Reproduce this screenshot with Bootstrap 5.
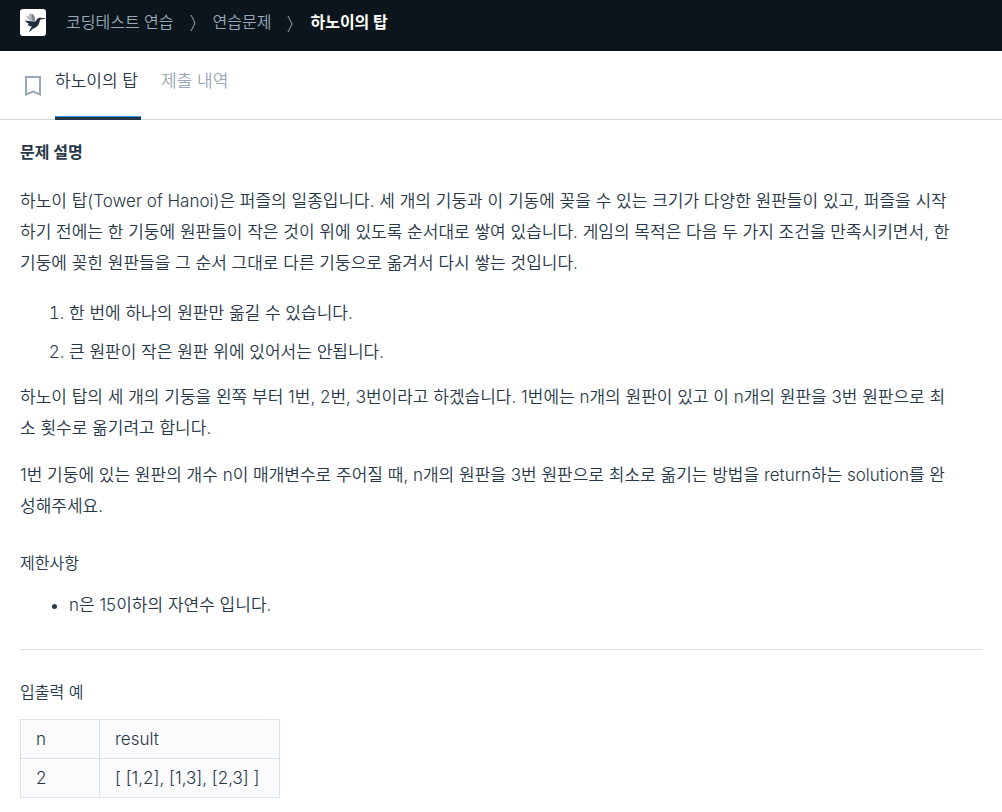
<!DOCTYPE html>
<html lang="ko">
<head>
<meta charset="utf-8">
<meta name="viewport" content="width=device-width, initial-scale=1">
<title>하노이의 탑</title>
<link href="https://cdn.jsdelivr.net/npm/bootstrap@5.3.0/dist/css/bootstrap.min.css" rel="stylesheet">
<style>
body{font-family:Inter,"Noto Sans CJK KR",sans-serif;font-weight:350;color:#263747;background:#fff;font-size:17px;line-height:31px}
.topbar{background:#0c151c;height:51px;padding:0 20px 6px}
.topbar .breadcrumb{font-size:16px;line-height:24px;gap:13px}
.topbar .breadcrumb a,.topbar .breadcrumb span{padding-bottom:2px}
.topbar a{color:#98a8b9}
.topbar .active{color:#fff}
.tabbar{border-bottom:1px solid #d0dadf;height:69px;padding:0 24px}
.tabbar .save-btn{color:#98a8b9;line-height:0;margin-right:13px;padding-top:2px}
.tabbar .nav{gap:20px}
.tabbar .nav-link{color:#98a8b9;height:69px;line-height:24px;padding:18px 0 0;min-width:86px}
.tabbar .nav-link.active{color:#263747;border-bottom:3px solid #263747;box-shadow:inset 0 -1px #3396f4}
.problem{padding:17px 20px 14px}
.problem h1{font-size:16px;line-height:30px;margin-bottom:19px}
.problem h2{font-size:16px;font-weight:350;line-height:24px;margin:29px 0 15px}
.problem ol,.problem ul{padding-left:49px}
.problem ol{margin-bottom:6px;padding-top:3px}
.problem li{padding-bottom:8px}
.problem hr{border-color:#d7e2eb;opacity:1;margin:20px 0 30px}
.sample{border-collapse:collapse;font-size:17px;min-width:260px}
.sample th,.sample td{border:1px solid #d7e2eb;background:#fbfbfd;padding:4px 15px;line-height:30px;font-weight:350}
.sample th:first-child{width:79px}
</style>
</head>
<body>
<header class="topbar d-flex align-items-center">
  <a href="#" class="d-flex me-3 pe-1" aria-label="홈">
    <svg width="26" height="27" viewBox="0 0 26 27"><rect width="26" height="27" rx="3" fill="#fff"/><path d="M6 7l3 .5V4.500l3.500 1 2.500 6-4 .5-3-2z" fill="#b3b8c0"/><path d="M11.500 4l3 3 .5 5-3-1z" fill="#7b8390"/><path d="M4.500 11.500l7 .7 4 .3c1-1 1.500-3 3.500-3.700 1.500-.4 2 .2 6 .3v.7l-4.500.7c-1 1-1 4-2.500 6-1.500 1.800-3.500 2.200-5.500 3.500l-3.500 3.500 1.200-3.500 1.800-2.500c-2.500 0-3.500-.8-4.500-2.200h2c-1.500-.8-3-2-5-3.800z" fill="#202b3d"/></svg>
  </a>
  <nav aria-label="경로">
    <div class="breadcrumb d-flex align-items-center mb-0">
      <a href="#" class="text-decoration-none">코딩테스트 연습</a>
      <svg width="13" height="18" viewBox="0 0 13 18" fill="none" stroke="#98a8b9"><path d="M4 1l4 8-4 8"/></svg>
      <a href="#" class="text-decoration-none">연습문제</a>
      <svg width="13" height="18" viewBox="0 0 13 18" fill="none" stroke="#98a8b9"><path d="M4 2l4 8-4 8"/></svg>
      <span class="active fw-bold" aria-current="page">하노이의 탑</span>
    </div>
  </nav>
</header>
<div class="tabbar d-flex align-items-center">
  <button type="button" class="save-btn btn px-0 pb-0 border-0" aria-label="북마크">
    <svg width="18" height="22" viewBox="0 0 18 22" fill="none" stroke="currentColor" stroke-width="2"><path d="M2 2h14v17.500l-7-3-7 3z"/></svg>
  </button>
  <nav class="nav">
    <a class="nav-link active" href="#">하노이의 탑</a>
    <a class="nav-link" href="#">제출 내역</a>
  </nav>
</div>
<main class="problem">
  <h1 class="fw-bold">문제 설명</h1>
  <p class="pe-4">하노이 탑(Tower of Hanoi)은 퍼즐의 일종입니다. 세 개의 기둥과 이 기동에 꽂을 수 있는 크기가 다양한 원판들이 있고, 퍼즐을 시작하기 전에는 한 기둥에 원판들이 작은 것이 위에 있도록 순서대로 쌓여 있습니다. 게임의 목적은 다음 두 가지 조건을 만족시키면서, 한 기둥에 꽂힌 원판들을 그 순서 그대로 다른 기둥으로 옮겨서 다시 쌓는 것입니다.</p>
  <ol>
    <li>한 번에 하나의 원판만 옮길 수 있습니다.</li>
    <li>큰 원판이 작은 원판 위에 있어서는 안됩니다.</li>
  </ol>
  <p class="pe-4">하노이 탑의 세 개의 기둥을 왼쪽 부터 1번, 2번, 3번이라고 하겠습니다. 1번에는 n개의 원판이 있고 이 n개의 원판을 3번 원판으로 최소 횟수로 옮기려고 합니다.</p>
  <p class="pe-4">1번 기둥에 있는 원판의 개수 n이 매개변수로 주어질 때, n개의 원판을 3번 원판으로 최소로 옮기는 방법을 return하는 solution를 완성해주세요.</p>
  <h2>제한사항</h2>
  <ul class="mb-0"><li>n은 15이하의 자연수 입니다.</li></ul>
  <hr>
  <h2>입출력 예</h2>
  <table class="sample">
    <thead><tr><th scope="col">n</th><th scope="col">result</th></tr></thead>
    <tbody><tr><td>2</td><td>[ [1,2], [1,3], [2,3] ]</td></tr></tbody>
  </table>
</main>
<script src="https://cdn.jsdelivr.net/npm/bootstrap@5.3.0/dist/js/bootstrap.bundle.min.js"></script>
</body>
</html>
